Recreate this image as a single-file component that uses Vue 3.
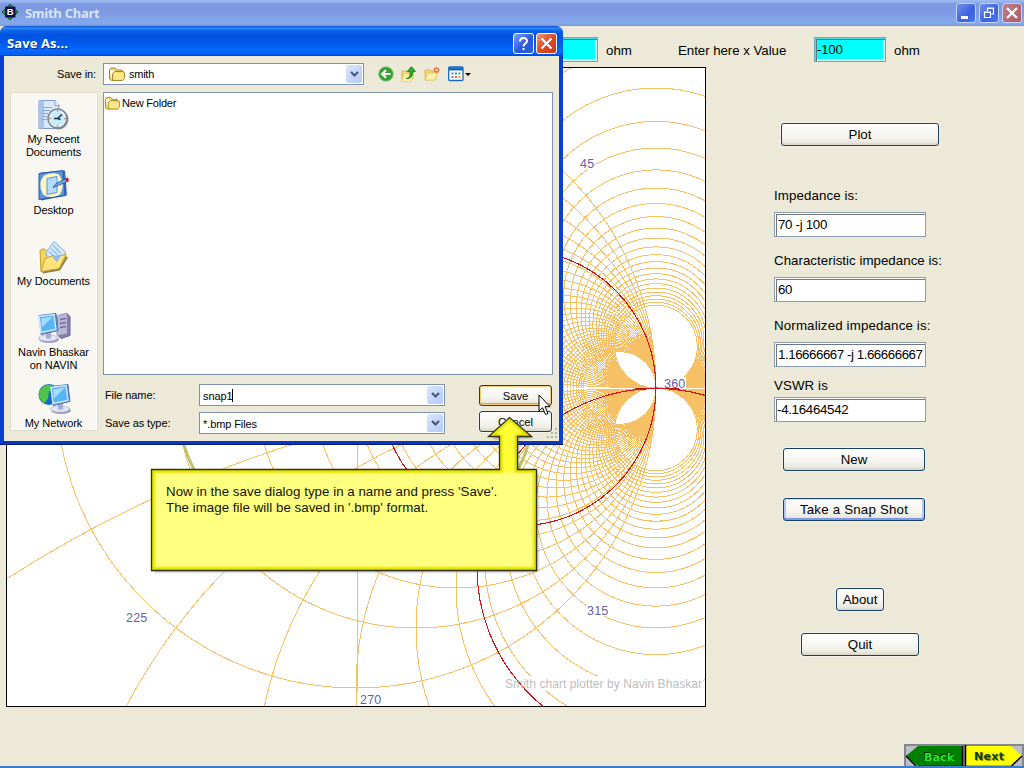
<script setup>
const steps = Array.from({ length: 29 }, (_, i) => (i + 1) * 0.25)
const resistances = [0, ...steps].map((r) => 300 / (1 + r))
const reactances = steps.map((x) => 300 / x)

const angles = [
  { text: '45', x: 580, y: 168, w: 16 },
  { text: '360', x: 664, y: 388, w: 23 },
  { text: '315', x: 587, y: 615, w: 23 },
  { text: '270', x: 360, y: 704, w: 23 },
  { text: '225', x: 126, y: 622, w: 23 },
]

const places = [
  { id: 'recent', lines: ['My Recent', 'Documents'] },
  { id: 'desktop', lines: ['Desktop'] },
  { id: 'docs', lines: ['My Documents'] },
  { id: 'computer', lines: ['Navin Bhaskar', 'on NAVIN'] },
  { id: 'network', lines: ['My Network'] },
]
</script>

<template>
  <div class="window">
    <header class="titlebar">
      <svg class="app-icon" width="16" height="16" viewBox="0 0 16 16">
        <path d="M8 0 11.500 3.500H4.500ZM16 8 12.500 4.500V11.500ZM8 16 4.500 12.500H11.500ZM0 8 3.500 11.500V4.500Z" fill="#19a03c" stroke="#064018" stroke-width=".8" />
        <rect x="3" y="2.500" width="10.500" height="11" rx="1" fill="#101058" />
        <text x="8.200" y="11.400" text-anchor="middle" font-size="9.500" font-weight="bold" font-family="Liberation Sans, sans-serif" fill="#fff">B</text>
      </svg>
      <span class="app-title">Smith Chart</span>
      <div class="win-buttons">
        <span class="wb"><svg width="18" height="18"><path d="M4 13.500h7" stroke="#fff" stroke-width="3" /></svg></span>
        <span class="wb"><svg width="18" height="18" fill="none" stroke="#fff"><path d="M7.500 7V4.500h6v5.500h-2M7 4h7" stroke-width="1.200" /><path d="M4.500 8.500h6v5h-6zM4 8h7" stroke-width="1.200" /></svg></span>
        <span class="wb close"><svg width="18" height="18"><path d="M4 4l10 10M14 4L4 14" stroke="#fff" stroke-width="2.300" /></svg></span>
      </div>
    </header>

    <div class="inputs-row">
      <div class="field cyan"></div>
      <span class="unit">ohm</span>
      <span class="enter">Enter here x Value</span>
      <div class="field cyan">-100</div>
      <span class="unit">ohm</span>
    </div>

    <main class="content">
      <div class="chart">
        <svg width="698" height="638" viewBox="7 68 698 638">
          <g fill="none" stroke="#f6c164" stroke-width="1" shape-rendering="crispEdges">
            <circle v-for="q in resistances" :key="'r' + q" :cx="656 - q" cy="388" :r="q" />
            <template v-for="q in reactances" :key="'x' + q">
              <circle cx="656" :cy="388 + q" :r="q" />
              <circle cx="656" :cy="388 - q" :r="q" />
            </template>
            <path d="M357.500 88V692" stroke-width="1" />
          </g>
          <path d="M62 388.500H705" stroke="#fffdf6" />
          <circle cx="356" cy="388" r="181.500" fill="none" stroke="#bcc468" stroke-width="3" />
          <g fill="#fff">
            <rect v-for="a in angles" :key="'b' + a.text" :x="a.x - 1" :y="a.y - 11" :width="a.w" height="12" />
            <rect x="505" y="676" width="198" height="15" />
          </g>
          <g fill="none" stroke="#d01018" stroke-width="1.100" shape-rendering="crispEdges">
            <circle cx="518" cy="388" r="138" />
            <circle cx="656" cy="567.500" r="179" />
            <path d="M635 388.500H679" />
          </g>
          <text v-for="a in angles" :key="a.text" class="angle" :x="a.x" :y="a.y">{{ a.text }}</text>
          <text class="credit" x="505" y="688" textLength="197">Smith chart plotter by Navin Bhaskar</text>
        </svg>
      </div>

      <aside class="panel">
        <button class="btn plot">Plot</button>
        <label class="lbl first">Impedance is:</label>
        <div class="field">70 -j 100</div>
        <label class="lbl">Characteristic impedance is:</label>
        <div class="field">60</div>
        <label class="lbl wide">Normalized impedance is:</label>
        <div class="field long">1.16666667 -j 1.66666667</div>
        <label class="lbl vswr">VSWR is</label>
        <div class="field tight">-4.16464542</div>
        <button class="btn new">New</button>
        <button class="btn snap">Take a Snap Shot</button>
        <button class="btn about">About</button>
        <button class="btn quit">Quit</button>
      </aside>
    </main>

    <nav class="pager">
      <svg width="120" height="24" viewBox="0 0 120 24">
        <rect width="120" height="24" fill="#85858d" />
        <path d="M2 2h56v21H2z" fill="#bcbcc2" />
        <path d="M14 2H58V22H14L2 12Z" fill="#008000" />
        <path d="M2 12 12 22M14 22.500H58.500V2" fill="none" stroke="#000" stroke-width="1.500" />
        <path d="M62 2h56v21H62z" fill="#bcbcc2" />
        <path d="M62 2H107L118 12 107 22H62Z" fill="#ff0" />
        <path d="M118 12 107 22.500H62M61.500 23V1" fill="none" stroke="#000" stroke-width="1.500" />
        <g font-family="DejaVu Sans, sans-serif" font-size="11" font-weight="bold">
          <text x="19" y="16" textLength="30" fill="#003800">Back</text>
          <text x="20" y="17" textLength="30" fill="#20e828">Back</text>
          <text x="71" y="17" textLength="30" fill="#a0a000">Next</text>
          <text x="70" y="16" textLength="30" fill="#104000">Next</text>
        </g>
      </svg>
    </nav>

    <section class="dialog">
      <header class="dlg-title">
        <span>Save As...</span>
        <div class="dlg-buttons">
          <span class="db"><svg width="19" height="19"><path d="M6 7.500C6 3 13 3 13 7c0 2.500-3.500 2.500-3.500 5.500M9.500 14v2" fill="none" stroke="#fff" stroke-width="2" /></svg></span>
          <span class="db red"><svg width="19" height="19"><path d="M4.500 4.500l10 10M14.500 4.500l-10 10" stroke="#fff" stroke-width="2.200" /></svg></span>
        </div>
      </header>
      <div class="dlg-body">
        <div class="save-in">
          <label>Save in:</label>
          <div class="combo loc">
            <svg width="18" height="16" viewBox="0 0 18 16"><path d="M1.500 4 3 2h4l1.500 2H14v2M1.500 4v9l2 1.500h11L16.500 12V7l-1-1.500h-9L4.500 8v6" fill="#f5dc70" stroke="#a8882c" /><path d="M5.500 7h10v6h-10z" fill="#fae88a" /></svg>
            <span>smith</span>
            <i class="arrow"><svg width="9" height="7"><path d="M1 1l3.500 3.500L8 1" fill="none" stroke="#44597f" stroke-width="2.200" /></svg></i>
          </div>
          <div class="tools">
            <svg width="16" height="16" viewBox="0 0 16 16"><circle cx="8" cy="8" r="7.300" fill="#38a030" stroke="#8cc884" /><path d="M12.500 8H5M8 4.200 4.200 8 8 11.800" fill="none" stroke="#fff" stroke-width="2.200" /></svg>
            <svg width="16" height="16" viewBox="0 0 16 16"><path d="M1 5h4l1 1h6v6l-2 3H1z" fill="#f2da78" stroke="#cfaa48" stroke-width=".8" /><path d="M4 8h9l-3 7H1z" fill="#fdf0a8" /><path d="M5 12.500c4-.5 4-3 4-7H6L10.500.500 14.500 5.500H12c0 5-2 7.500-7 7z" fill="#2ea82a" stroke="#14781c" stroke-width=".7" /></svg>
            <svg width="16" height="16" viewBox="0 0 16 16"><path d="M1 4h5l1 1h5v7l-1 2H1z" fill="#efd56c" stroke="#d5b454" stroke-width=".8" /><path d="M4 7h10l-3 7H1z" fill="#fdf0a8" stroke="#dfc468" stroke-width=".7" /><path d="M12.500 1v6M9.500 4h6M10.400 1.900l4.200 4.200M14.600 1.900l-4.200 4.200" stroke="#f06030" stroke-width="1.300" /><circle cx="12.500" cy="4" r="1.200" fill="#fff098" /></svg>
            <svg class="views" width="24" height="16" viewBox="0 0 24 16"><rect x=".7" y="1" width="14.300" height="13.500" rx="1" fill="#fff" stroke="#1a67c0" stroke-width="1.300" /><path d="M1 3h14" stroke="#1a67c0" stroke-width="3" /><path d="M3.500 7.500h2m1.500 0h2M3.500 11h2" stroke="#5a88c0" stroke-width="2" /><path d="M10.500 7.500h2" stroke="#48a848" stroke-width="2" /><path d="M7 11h2" stroke="#e06030" stroke-width="2" /><path d="M10.500 11h2" stroke="#e0a020" stroke-width="2" /><path d="M17 7h6l-3 3z" fill="#000" /></svg>
          </div>
        </div>
        <div class="dlg-main">
          <div class="places">
            <div v-for="p in places" :key="p.id" class="place">
              <svg width="36" height="36" viewBox="0 0 36 35">
                <g v-if="p.id === 'recent'">
                  <path d="M3 3h16l4 5v23H3z" fill="#d9e8fb" stroke="#7b98c8" /><path d="M3 3h5v28H3z" fill="#a9c5ee" /><path d="M19 3v5h4" fill="#fff" stroke="#7b98c8" /><path d="M6 10h10M6 13h8M6 16h6M6 19h5M6 22h5" stroke="#8cabdb" />
                  <circle cx="22.500" cy="22" r="10" fill="#8b9099" /><circle cx="21.500" cy="21" r="9.500" fill="#dff2fb" stroke="#778697" stroke-width="1.600" /><circle cx="21.500" cy="21" r="7" fill="#c9eafa" /><path d="M21.500 21 26 17M21.500 21H18M21.500 21l3 1" stroke="#16334d" stroke-width="1.600" /><path d="M21.500 12.500v2M21.500 27.500v2M13 21h2M28 21h2" stroke="#e08848" stroke-width="1.300" />
                </g>
                <g v-else-if="p.id === 'desktop'">
                  <path d="M5 4 29 2 31 27 5 32 3 7z" fill="#356cba" /><path d="M3 5 27 2 29 27 3 31z" fill="#5995de" stroke="#2a5ba8" /><path d="M8 7Q16 3 23 6Q30 17 24 26Q14 31 7 26Q1 15 8 7z" fill="#fff5c5" /><path d="M11 10 21 8V24L11 26z" fill="#b4dcff" stroke="#5d93d1" /><path d="M17 19 20 15 30 10 31.500 13 22 17z" fill="#68aef0" stroke="#304f80" stroke-width=".8" /><path d="M29 10l3-1 1 3-2 2z" fill="#c5252e" />
                </g>
                <g v-else-if="p.id === 'docs'">
                  <path d="M6 13 30 17 32 18 24 31 7 34 5 30z" fill="#8d814c" /><path d="M4 11 8 9 12 13 20 17 29 14 30 17 23 29 5 32z" fill="#f5d457" stroke="#c69e35" /><path d="M10 13 18 2 30 13 23 21 12 20z" fill="#d3eaff" stroke="#82add9" /><path d="M17 6l8 8M15 9l8 8M13 12l7 7" stroke="#91bfe9" stroke-width="1.300" /><path d="M9 19 17 16 20 17 30 15 23 29 5 32z" fill="#ffe27a" stroke="#c7a03a" /><path d="M16 17l9-1-4 7z" fill="#8bbceb" />
                </g>
                <g v-else>
                  <g v-if="p.id === 'computer'"><path d="M22 5 31 3 34 6V25L25 28 21 24z" fill="#8580ad" stroke="#6863a0" /><path d="M22 5 31 3V23L21 25z" fill="#b9b6d5" /><path d="M24 9l6-1M24 13l6-1M24 17l6-1" stroke="#746f9b" stroke-width="1.500" /></g>
                  <g v-else><circle cx="13" cy="13" r="10.500" fill="#1769c5" /><path d="M3 12Q5 3 15 3l3 4-5 3-1 7-4 5Q3 18 3 12z" fill="#4fc447" /></g>
                  <g :transform="p.id === 'network' ? 'translate(12 0)' : 'translate(0 0)'"><ellipse cx="13" cy="29" rx="10" ry="3.500" fill="#9a9bbd" /><ellipse cx="12" cy="27.500" rx="9.500" ry="3.200" fill="#e4e5f4" stroke="#a4a8c8" stroke-width=".6" /><path d="M10 21h5v7h-5z" fill="#a7adcd" /><path d="M3 5 20 3 22 20 5 24z" fill="#4682c1" stroke="#557baa" /><path d="M3 6 18 4 20 19 5 22z" fill="#56b5f5" stroke="#d0e9fb" stroke-width="1.500" /><path d="M5 8 17 6 6 17z" fill="#a6dcff" /></g>
                </g>
              </svg>
              <span v-for="l in p.lines" :key="l">{{ l }}</span>
            </div>
          </div>
          <div class="right">
            <div class="list">
              <svg width="17" height="16" viewBox="0 0 18 16"><path d="M1.500 4 3 2h4l1.500 2H14v2M1.500 4v9l2 1.500h11L16.500 12V7l-1-1.500h-9L4.500 8v6" fill="#f5dc70" stroke="#a8882c" /><path d="M5.500 7h10v6h-10z" fill="#fae88a" /></svg>
              <span>New Folder</span>
            </div>
            <div class="form">
              <label>File name:</label>
              <div class="combo name"><span>snap1</span><b class="caret"></b><i class="arrow"><svg width="9" height="7"><path d="M1 1l3.500 3.500L8 1" fill="none" stroke="#44597f" stroke-width="2.200" /></svg></i></div>
              <button class="btn small save">Save</button>
              <label>Save as type:</label>
              <div class="combo name"><span>*.bmp Files</span><i class="arrow"><svg width="9" height="7"><path d="M1 1l3.500 3.500L8 1" fill="none" stroke="#44597f" stroke-width="2.200" /></svg></i></div>
              <button class="btn small cancel">Cancel</button>
            </div>
          </div>
        </div>
      </div>
      <svg class="grip" width="12" height="12" fill="#b8b4a0"><path d="M8 0h2v2H8zM4 4h2v2H4zM8 4h2v2H8zM0 8h2v2H0zM4 8h2v2H4zM8 8h2v2H8z" /></svg>
    </section>

    <div class="callout">
      <svg width="394" height="162" viewBox="150 415 394 162">
        <defs>
          <clipPath id="note"><path d="M151.500 469.500H499.500V436.500H488.500L509.500 417.500 531.500 436.500H517.500V469.500H536.500V570.500H151.500Z" /></clipPath>
          <filter id="soft" x="-5%" y="-5%" width="110%" height="115%"><feGaussianBlur stdDeviation="1.200" /></filter>
        </defs>
        <path d="M154 472H502V439H492L511 421 533 438H519V472H538V572H154Z" fill="#555" opacity=".5" filter="url(#soft)" />
        <path d="M151.500 469.500H499.500V436.500H488.500L509.500 417.500 531.500 436.500H517.500V469.500H536.500V570.500H151.500Z" fill="#ffff80" />
        <g clip-path="url(#note)">
          <path d="M151.500 469.500H499.500V436.500H488.500L509.500 417.500 531.500 436.500H517.500V469.500H536.500V570.500H151.500Z" fill="none" stroke="#e2e200" stroke-width="7" filter="url(#soft)" />
          <path d="M504 473V434H497L509.500 422 522 434H513V473Z" fill="#ffff30" filter="url(#soft)" />
        </g>
        <path d="M151.500 469.500H499.500V436.500H488.500L509.500 417.500 531.500 436.500H517.500V469.500H536.500V570.500H151.500Z" fill="none" stroke="#33330a" stroke-width="1.300" />
      </svg>
      <p><span>Now in the save dialog type in a name and press 'Save'.</span><br /><span>The image file will be saved in '.bmp' format.</span></p>
    </div>

    <svg class="cursor" width="14" height="22" viewBox="0 0 14 22"><path d="M1 1V17L4.500 13.700 7.500 20.500 10 19.400 7 12.700H12Z" fill="#fff" stroke="#000" /></svg>
  </div>
</template>

<style>
html, body { margin: 0; overflow: hidden; }
</style>

<style scoped>
* { box-sizing: border-box; }
.window { position: relative; width: 1024px; height: 768px; background: #ece9d8; border-bottom: 2px solid #3c7bc9; overflow: hidden; font-family: "Liberation Sans", sans-serif; font-size: 13.3px; color: #000; display: flex; flex-direction: column; }
.titlebar { height: 26px; flex: none; display: flex; align-items: center; padding: 0 2px 0 2px; background: linear-gradient(#9db9f0 0, #96b3ee 2px, #7c97df 4px, #7f9ae1 13px, #82a6e9 20px, #84a8ea 24px, #7691dc 26px); }
.app-icon { margin-top: -2px; }
.app-title { margin-left: 7px; flex: 1; font: bold 13px "Open Sans", sans-serif; letter-spacing: -0.3px; color: #dce5f8; }
.win-buttons { display: flex; gap: 3px; }
.wb { width: 20px; height: 20px; border: 1px solid #c6d2f5; border-radius: 3px; background: linear-gradient(135deg, #6f90ea, #3b62de 60%, #4d7aea); }
.wb svg, .db svg { display: block; }
.wb.close { background: linear-gradient(135deg, #c08088, #b05864); }

.inputs-row { height: 41px; flex: none; display: flex; padding: 11px 0 0 526px; }
.inputs-row span { line-height: 28px; }
.unit { margin-left: 8px; width: 72px; }
.enter { width: 136px; white-space: nowrap; letter-spacing: -0.05px; }
.field { width: 152px; height: 25px; flex: none; padding: 0 2px 0 3px; border: 1px solid #8b9db0; background: #fff; box-shadow: inset 1px 1px #fff, inset 2px 2px #73777d, inset -1px -1px #fff; line-height: 24px; white-space: pre; letter-spacing: -0.3px; overflow: hidden; }
.field.long { letter-spacing: -0.45px; }
.field.tight { padding-left: 2px; }
.field.cyan { width: 72px; background: #0ff; border-color: #66aebb; letter-spacing: -0.25px; padding-left: 2px; box-shadow: inset 1px 1px #5fd5dc, inset 2px 2px #4a8085, inset -2px -2px #d4ffff; }

.content { display: flex; height: 640px; flex: none; padding-left: 6px; }
.chart { width: 700px; height: 640px; flex: none; border: 1px solid #000; background: #fff; }
.chart svg { display: block; }
.angle { font-size: 12.5px; letter-spacing: 0.2px; fill: #6660a8; }
.credit { font-size: 12px; fill: #bdbdbd; }
.panel { display: flex; flex-direction: column; padding-left: 68px; align-items: flex-start; }
.lbl { height: 16px; line-height: 16px; margin: 16px 0 8px; white-space: nowrap; letter-spacing: 0.03px; }
.lbl.wide { letter-spacing: 0.15px; }
.lbl.first { margin-top: 42px; letter-spacing: 0.1px; }
.lbl.vswr { margin: 11px 0 3px; letter-spacing: 0.1px; }
.btn { height: 23px; padding: 0; flex: none; border: 1px solid #17406f; border-radius: 3px; font: 13.3px "Liberation Sans", sans-serif; color: #000; background: linear-gradient(#fff, #f5f4ef 60%, #ebe9e0 85%, #d8d3c6); box-shadow: 0 0 0 1px #f3f1e8; }
.plot { width: 158px; margin: 56px 0 0 7px; }
.new { width: 142px; margin: 26px 0 0 9px; }
.snap { width: 142px; margin: 27px 0 0 9px; letter-spacing: 0.2px; box-shadow: inset 0 1px #cee2ff, inset 0 -2px #7f9ae4, inset 2px 0 #b4c9f2, inset -2px 0 #b4c9f2, 0 0 0 1px #f3f1e8; }
.about { width: 48px; margin: 67px 0 0 62px; }
.quit { width: 118px; margin: 22px 0 0 27px; }

.pager { position: absolute; left: 904px; top: 744px; width: 120px; height: 24px; }
.pager svg { display: block; }

.dialog { position: absolute; left: 0; top: 26px; width: 563px; height: 419px; background: #ece9d8; border: 4px solid #0b3fd2; border-top: 0; border-radius: 7px 7px 0 0; font-size: 11px; border-bottom-color: #0838bd; }
.dialog::after { content: ""; position: absolute; left: -4px; right: -4px; bottom: -4px; height: 1px; background: #001a80; }
.dlg-title { height: 30px; margin: 0 -4px; padding: 1px 6px 0 7px; border-radius: 7px 7px 0 0; display: flex; align-items: center; justify-content: space-between; color: #fff; font: bold 13px "Open Sans", sans-serif; letter-spacing: 0.1px; text-shadow: 1px 1px #10318c; background: linear-gradient(#0a48c8 0, #2d8af8 2px, #0a60ee 5px, #0053e0 9px, #0058ea 16px, #0568ff 24px, #0560f8 28px, #0040c8 30px); }
.dlg-title > span { padding-top: 3px; }
.dlg-buttons { display: flex; gap: 2px; padding-top: 3px; }
.db { width: 21px; height: 21px; border: 1px solid #fff; border-radius: 3px; background: linear-gradient(135deg, #7ba0f5, #2c58dd 55%, #2a5ce8); }
.db.red { background: linear-gradient(135deg, #f09878, #dc4a24 50%, #cc3a18); }
.dlg-body { display: flex; flex-direction: column; }
.save-in { display: flex; height: 36px; padding-top: 7px; }
.save-in label { width: 99px; text-align: right; padding-right: 7px; line-height: 22px; letter-spacing: -0.1px; }
.combo { display: flex; align-items: center; height: 22px; border: 1px solid #7f92ad; background: #fff; padding-right: 1px; }
.loc { width: 261px; padding-left: 4px; }
.loc span { margin-left: 3px; letter-spacing: -0.25px; }
.arrow { margin-left: auto; width: 16px; height: 18px; display: flex; align-items: center; justify-content: center; background: linear-gradient(135deg, #dce7fd, #b4c8f6); border-radius: 2px; }
.tools { display: flex; gap: 7px; padding: 3px 0 0 14px; }
.tools .views { margin-left: 1px; }
.dlg-main { display: flex; padding-left: 7px; }
.places { width: 86px; height: 337px; margin-top: 1px; padding-top: 4px; overflow: hidden; background: #f9f7f1; border: solid #fff; border-width: 0 1px 1px 0; box-shadow: 0 0 0 1px #e0dccb; }
.place { height: 71px; display: flex; flex-direction: column; align-items: center; }
.place svg { flex: none; }
.place span { line-height: 13px; white-space: nowrap; font-size: 11px; letter-spacing: -0.05px; }
.right { margin-left: 6px; }
.list { width: 450px; height: 283px; border: 1px solid #7f92ad; background: #fff; display: flex; align-items: flex-start; padding: 2px 0; }
.list span { line-height: 16px; margin-left: 1px; letter-spacing: -0.2px; }
.form { display: grid; grid-template-columns: 94px 246px 107px; row-gap: 5px; margin-top: 9px; padding-left: 2px; align-items: start; }
.form label { line-height: 23px; height: 23px; letter-spacing: -0.1px; }
.form .combo span { padding-top: 2px; letter-spacing: -0.1px; }
.name { width: 246px; padding-left: 3px; }
.caret { width: 1px; height: 13px; background: #000; }
.form .small { width: 73px; height: 21px; margin: 1px 0 0 34px; font-size: 11.3px; }
.form .cancel { margin-top: -1px; }
.form .save { box-shadow: inset 0 0 0 1px #f5cb7a, inset 0 -1px 0 1px #e8a53a; }
.grip { position: absolute; right: 0; bottom: 1px; }

.callout { position: absolute; left: 150px; top: 415px; width: 394px; height: 162px; }
.callout svg { display: block; }
.callout p { position: absolute; left: 16px; top: 69px; margin: 0; line-height: 16px; white-space: nowrap; font-size: 13.3px; letter-spacing: 0.03px; color: #14140a; }
.cursor { position: absolute; left: 538px; top: 394px; }
</style>
